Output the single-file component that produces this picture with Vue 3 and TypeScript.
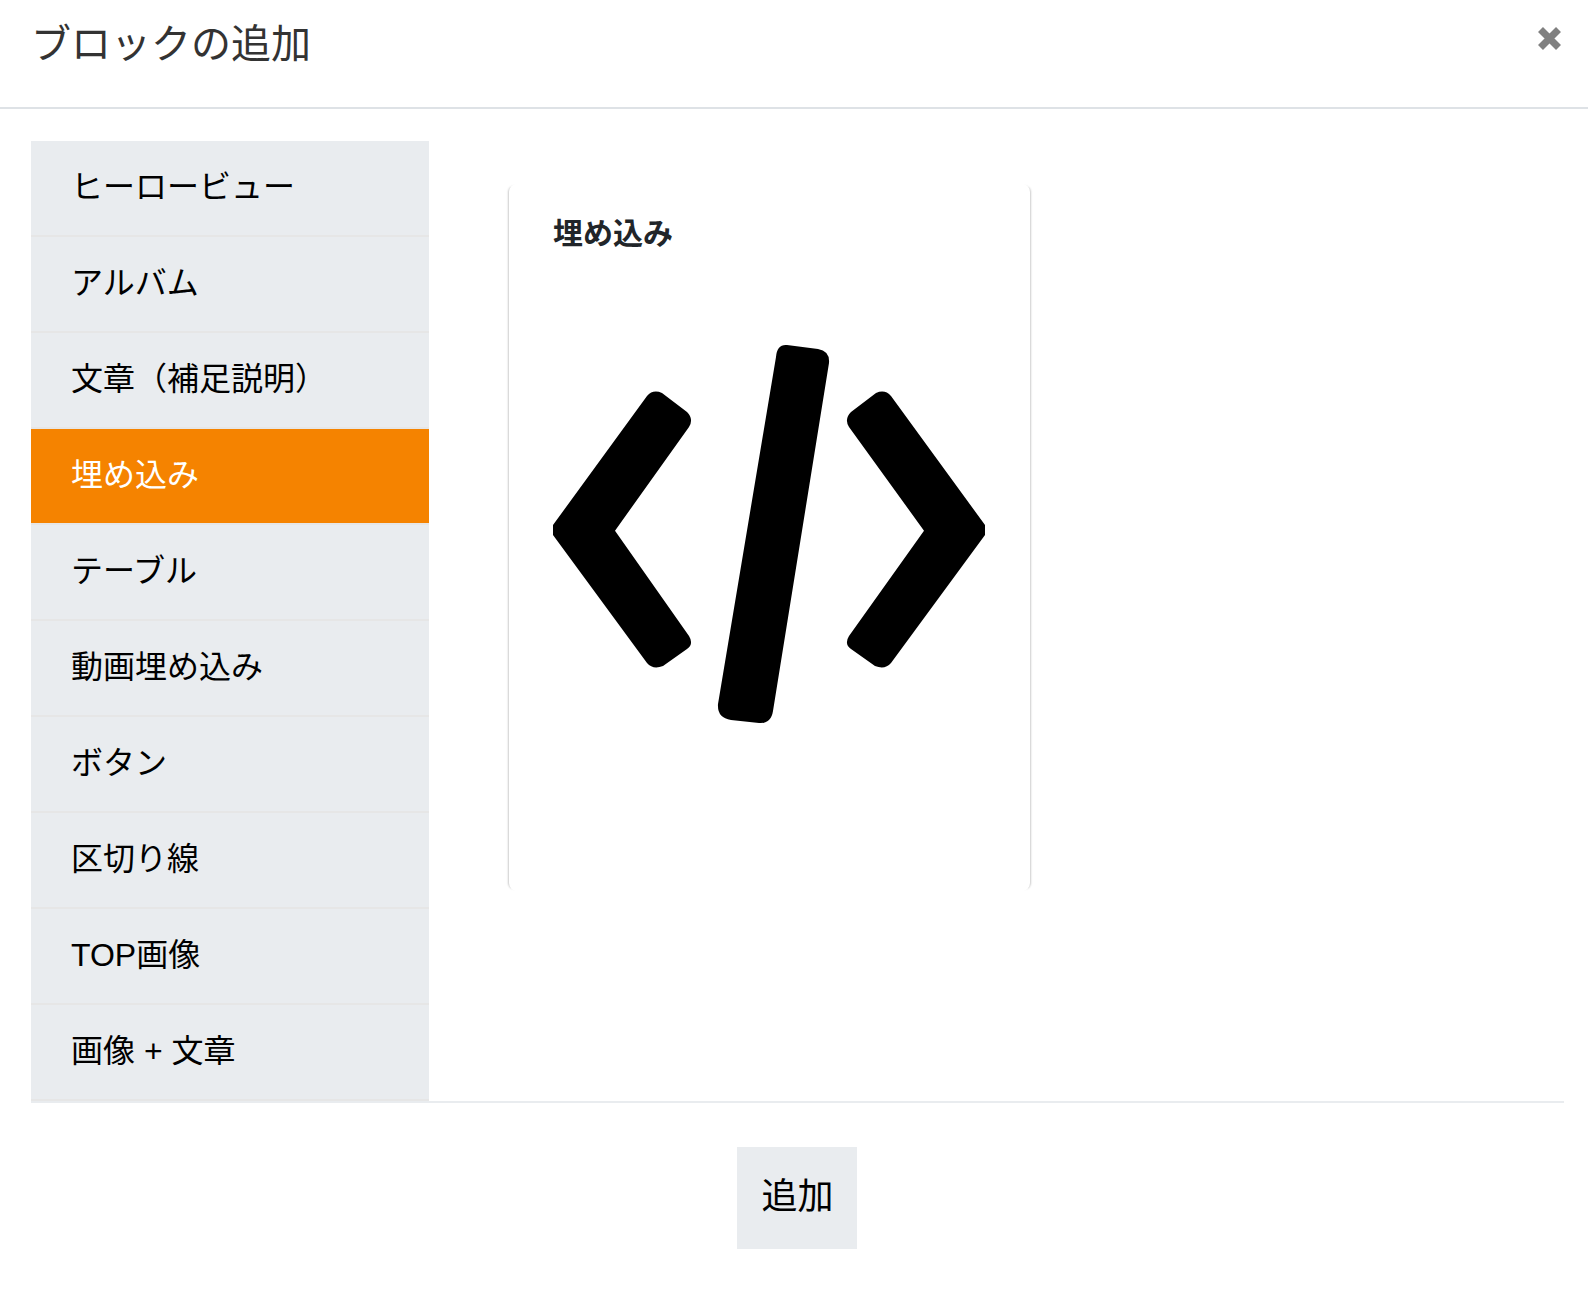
<template>
  <div class="modal">
    <header class="modal-header">
      <h2 class="modal-title">ブロックの追加</h2>
      <button class="close" type="button" aria-label="閉じる">
        <svg viewBox="0 0 23 23" width="23" height="23">
          <path d="M2.5 2.5 L20.5 20.5 M20.5 2.5 L2.5 20.5" />
        </svg>
      </button>
    </header>

    <div class="modal-body">
      <ul class="block-list">
        <li
          v-for="item in items"
          :key="item"
          class="block-item"
          :class="{ active: item === selected }"
        >
          {{ item }}
        </li>
      </ul>

      <div class="preview">
        <section class="card">
          <h3 class="card-title">埋め込み</h3>
          <svg class="embed-icon" viewBox="0 0 432 432" width="432" height="432">
            <path d="M0 207 L94 78 Q100 71 109 75 L134 94 Q141 101 136 109 L62 212.7 L136 318 Q141 326 134 331 L110 348 Q100 352 94 345 L0 217 Z" />
            <path d="M432 207 L338 78 Q332 71 323 75 L298 94 Q291 101 296 109 L371 212.7 L296 318 Q291 326 298 331 L322 348 Q332 352 338 345 L432 217 Z" />
            <path d="M234 27 L265 31 Q277 33 276 45 L220 393 Q218 406 206 405 L178 402 Q164 400 165 386 L223 39 Q224 26 234 27 Z" />
          </svg>
        </section>
      </div>
    </div>

    <footer class="modal-footer">
      <button class="add-button" type="button">追加</button>
    </footer>
  </div>
</template>

<script setup lang="ts">
import { ref } from "vue";

const selected = ref("埋め込み");

const items: string[] = [
  "ヒーロービュー",
  "アルバム",
  "文章（補足説明）",
  "埋め込み",
  "テーブル",
  "動画埋め込み",
  "ボタン",
  "区切り線",
  "TOP画像",
  "画像 + 文章",
];
</script>

<style>
html,
body {
  margin: 0;
  background: #fff;
}
</style>

<style scoped>
.modal {
  width: 1588px;
  height: 1298px;
  box-sizing: border-box;
  font-family: "Liberation Sans", "Noto Sans CJK JP", sans-serif;
  color: #000;
  background: #fff;
}

.modal-header {
  display: flex;
  justify-content: space-between;
  align-items: flex-start;
  height: 107px;
  border-bottom: 2px solid #dee2e6;
  padding: 0 27px 0 31px;
}

.modal-title {
  margin: 20px 0 0;
  font-size: 40px;
  font-weight: 400;
  line-height: 48px;
  color: #333;
}

.close {
  margin-top: 27px;
  padding: 0;
  border: 0;
  background: none;
  line-height: 0;
}

.close svg {
  fill: none;
  stroke: #808080;
  stroke-width: 7;
}

.modal-body {
  display: flex;
  align-items: flex-start;
  margin: 32px 24px 0 31px;
  border-bottom: 2px solid #e9ecef;
}

.block-list {
  flex: 0 0 398px;
  margin: 0;
  padding: 0;
  list-style: none;
}

.block-item {
  box-sizing: border-box;
  height: 96px;
  padding: 0 40px;
  border-bottom: 2px solid #e6e6e6;
  background: #e9ecef;
  background-clip: padding-box;
  font-size: 32px;
  line-height: 93px;
}

.block-item.active {
  background: #f58300;
  background-clip: padding-box;
  color: #fff;
}

.preview {
  padding: 43px 0 0 80px;
}

.card {
  box-sizing: border-box;
  width: 521px;
  height: 707px;
  padding: 28px 44px 0;
  border-radius: 8px;
  background: #fff;
  box-shadow:
    -3px 0 2px -2px rgba(0, 0, 0, 0.2),
    3px 0 2px -2px rgba(0, 0, 0, 0.2);
}

.card-title {
  margin: 0 0 62px;
  font-size: 30px;
  font-weight: 700;
  line-height: 44px;
  color: #212529;
}

.embed-icon {
  display: block;
  fill: #000;
  filter: blur(0.6px);
}

.modal-footer {
  display: flex;
  justify-content: center;
  padding: 44px 26px 0 31px;
}

.add-button {
  width: 120px;
  height: 102px;
  padding: 0 0 10px 2px;
  border: 0;
  background: #e9ecef;
  color: #000;
  font-family: inherit;
  font-size: 36px;
}
</style>
